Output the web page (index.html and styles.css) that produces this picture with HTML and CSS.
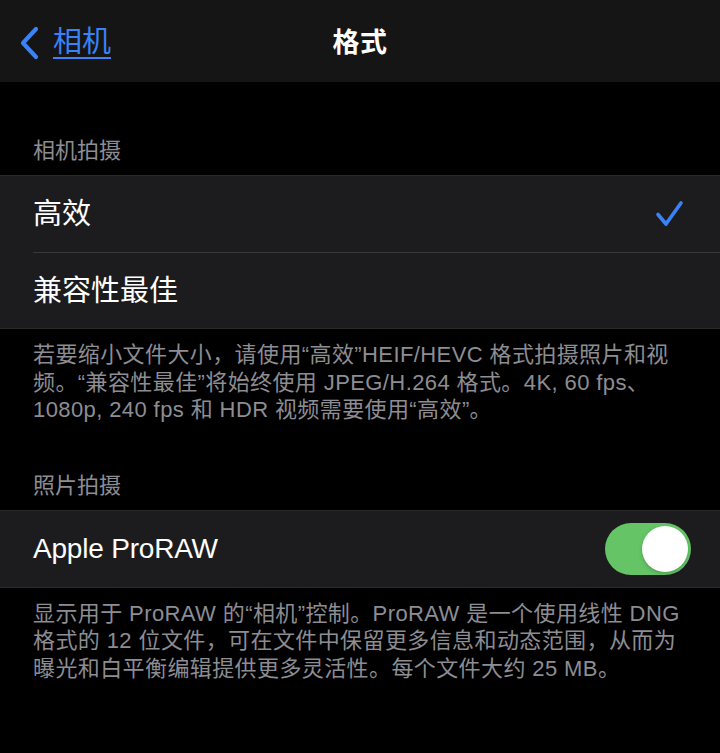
FILE: index.html
```html
<!DOCTYPE html>
<html lang="zh-CN">
<head>
<meta charset="utf-8">
<title>格式</title>
<link rel="stylesheet" href="styles.css">
</head>
<body>
<div class="screen">
  <header class="navbar">
    <a class="back" href="#">
      <svg class="chevron" width="22" height="34" viewBox="0 0 22 34" aria-hidden="true">
        <path d="M17 3 L4 17 L17 31" fill="none" stroke="#3a82f7" stroke-width="4.2" stroke-linecap="round" stroke-linejoin="round"/>
      </svg>
      <span class="back-label">相机</span>
    </a>
    <h1 class="title">格式</h1>
  </header>

  <div class="section-header first">相机拍摄</div>
  <ul class="group">
    <li class="row">
      <span class="row-label">高效</span>
      <svg class="check" width="30" height="28" viewBox="0 0 30 28" aria-hidden="true">
        <path d="M3 14.5 L11 24 L26 3" fill="none" stroke="#3a82f7" stroke-width="3.6" stroke-linecap="round" stroke-linejoin="round"/>
      </svg>
    </li>
    <li class="row">
      <span class="row-label">兼容性最佳</span>
    </li>
  </ul>
  <p class="section-footer">若要缩小文件大小，请使用“高效”HEIF/HEVC 格式拍摄照片和视<br>频。“兼容性最佳”将始终使用 JPEG/H.264 格式。4K, 60 fps、<br>1080p, 240 fps 和 HDR 视频需要使用“高效”。</p>

  <div class="section-header">照片拍摄</div>
  <ul class="group">
    <li class="row">
      <span class="row-label latin">Apple ProRAW</span>
      <span class="toggle on"><span class="knob"></span></span>
    </li>
  </ul>
  <p class="section-footer">显示用于 ProRAW 的“相机”控制。ProRAW 是一个使用线性 DNG<br>格式的 12 位文件，可在文件中保留更多信息和动态范围，从而为<br>曝光和白平衡编辑提供更多灵活性。每个文件大约 25 MB。</p>
</div>
</body>
</html>
```

FILE: styles.css
```css
* {
  box-sizing: border-box;
}

html, body {
  margin: 0;
  padding: 0;
  background: #000;
}

body {
  font-family: "Liberation Sans", "Noto Sans CJK SC", sans-serif;
  color: #fff;
}

.screen {
  width: 720px;
  min-height: 753px;
  background: #000;
}

.navbar {
  height: 82px;
  background: #151515;
  position: relative;
  display: flex;
  align-items: center;
  justify-content: center;
}

.back {
  position: absolute;
  left: 19px;
  top: 0;
  height: 82px;
  display: flex;
  align-items: center;
  gap: 12px;
  color: #3a82f7;
  text-decoration: none;
}

.chevron {
  display: block;
  margin-top: 4px;
}

.back-label {
  font-size: 29px;
  text-decoration: underline;
  text-underline-offset: 5px;
  text-decoration-thickness: 2px;
  line-height: 34px;
  margin-top: 2px;
}

.title {
  margin: 0;
  font-size: 27px;
  font-weight: 700;
  line-height: 34px;
  margin-top: 4px;
  letter-spacing: 0.5px;
}

.section-header {
  font-size: 22px;
  line-height: 28px;
  color: #8d8d93;
  padding: 0 33px 10px;
  margin-top: 48px;
}

.section-header.first {
  margin-top: 55px;
}

.group {
  list-style: none;
  margin: 0;
  padding: 0;
  background: #1c1c1e;
  border-top: 1px solid #2a2a2c;
  border-bottom: 1px solid #2a2a2c;
}

.row {
  height: 76px;
  padding: 0 28px 0 33px;
  display: flex;
  align-items: center;
  justify-content: space-between;
  position: relative;
}

.row + .row {
  border-top: 1px solid #38383a;
  margin-left: 33px;
  padding-left: 0;
}

.row-label {
  font-size: 29px;
  line-height: 36px;
}

.row-label.latin {
  font-size: 28px;
  letter-spacing: -0.2px;
}

.check {
  display: block;
  margin-right: 7px;
}

.toggle {
  width: 86px;
  height: 52px;
  border-radius: 26px;
  background: #65c466;
  display: flex;
  align-items: center;
  justify-content: flex-end;
  padding: 0 3px;
  margin-right: 1px;
}

.knob {
  width: 46px;
  height: 46px;
  border-radius: 50%;
  background: #fff;
  box-shadow: 0 2px 4px rgba(0, 0, 0, 0.18);
}

.section-footer {
  margin: 0;
  padding: 12px 20px 0 33px;
  font-size: 22px;
  line-height: 27.5px;
  letter-spacing: 0.4px;
  color: #8d8d93;
  white-space: nowrap;
}
```
